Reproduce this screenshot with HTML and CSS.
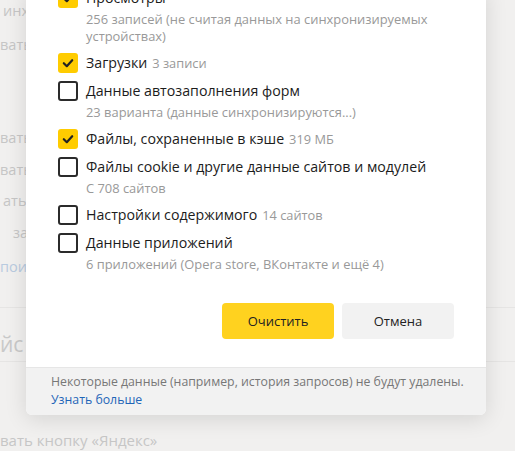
FILE: index.html
```html
<!DOCTYPE html>
<html lang="ru">
<head>
<meta charset="utf-8">
<title>Очистка истории</title>
<link rel="stylesheet" href="styles.css">
</head>
<body>
<div class="page">
  <div class="bg-row r1 ind3">инх</div>
  <div class="bg-row r2">вать</div>
  <div class="bg-row r3">вать</div>
  <div class="bg-row r4">вать</div>
  <div class="bg-row r5 ind3">ать</div>
  <div class="bg-row r6 ind13">зап</div>
  <div class="bg-row r7 link">поис</div>
  <div class="bg-sep s1"></div>
  <div class="bg-head">йс</div>
  <div class="bg-sep s2"></div>
  <div class="bg-row r9">вать кнопку «Яндекс»</div>
</div>

<div class="dialog">
  <div class="dialog-body">
    <ul class="items">
      <li class="item">
        <div class="row"><span class="cb checked"><svg viewBox="0 0 20 20" width="20" height="20"><path d="M5.8 10.2l3 3 5.4-6" fill="none" stroke="#222" stroke-width="2.2" stroke-linecap="round" stroke-linejoin="round"/></svg></span><span class="label">Просмотры</span></div>
        <div class="sub">256 записей (не считая данных на синхронизируемых<br>устройствах)</div>
      </li>
      <li class="item">
        <div class="row"><span class="cb checked"><svg viewBox="0 0 20 20" width="20" height="20"><path d="M5.8 10.2l3 3 5.4-6" fill="none" stroke="#222" stroke-width="2.2" stroke-linecap="round" stroke-linejoin="round"/></svg></span><span class="label">Загрузки<span class="count">3 записи</span></span></div>
      </li>
      <li class="item">
        <div class="row"><span class="cb"></span><span class="label">Данные автозаполнения форм</span></div>
        <div class="sub">23 варианта (данные синхронизируются...)</div>
      </li>
      <li class="item">
        <div class="row"><span class="cb checked"><svg viewBox="0 0 20 20" width="20" height="20"><path d="M5.8 10.2l3 3 5.4-6" fill="none" stroke="#222" stroke-width="2.2" stroke-linecap="round" stroke-linejoin="round"/></svg></span><span class="label">Файлы, сохраненные в кэше<span class="count">319 МБ</span></span></div>
      </li>
      <li class="item">
        <div class="row"><span class="cb"></span><span class="label">Файлы cookie и другие данные сайтов и модулей</span></div>
        <div class="sub">С 708 сайтов</div>
      </li>
      <li class="item">
        <div class="row"><span class="cb"></span><span class="label">Настройки содержимого<span class="count">14 сайтов</span></span></div>
      </li>
      <li class="item">
        <div class="row"><span class="cb"></span><span class="label">Данные приложений</span></div>
        <div class="sub">6 приложений (Opera store, ВКонтакте и ещё 4)</div>
      </li>
    </ul>
    <div class="actions">
      <button class="btn btn-primary">Очистить</button>
      <button class="btn btn-secondary">Отмена</button>
    </div>
  </div>
  <div class="dialog-footer">
    <div class="note">Некоторые данные (например, история запросов) не будут удалены.</div>
    <a class="more" href="#">Узнать больше</a>
  </div>
</div>
</body>
</html>
```

FILE: styles.css
```css
html, body {
  margin: 0;
  padding: 0;
}
body {
  width: 515px;
  height: 451px;
  overflow: hidden;
  background: #f1f0ef;
  font-family: "Open Sans", "Noto Sans", sans-serif;
  position: relative;
}
.page {
  display: flex;
  flex-direction: column;
  color: #c6c6c6;
  font-size: 14.5px;
}
.bg-row {
  line-height: 20px;
  height: 20px;
  white-space: nowrap;
}
.ind3 { padding-left: 3px; }
.ind13 { padding-left: 13px; }
.r1 { margin-top: 1px; }
.r2 { margin-top: 14px; }
.r3 { margin-top: 73px; }
.r4 { margin-top: 12px; }
.r5 { margin-top: 11px; }
.r6 { margin-top: 12px; }
.r7 { margin-top: 14px; }
.link { color: #b9cbe0; }
.bg-sep {
  height: 1px;
  background: #e6e5e4;
}
.s1 { margin-top: 30px; }
.bg-head {
  margin-top: 22px;
  font-size: 21px;
  line-height: 28px;
  height: 28px;
  color: #c9c9c9;
}
.s2 { margin-top: 3px; }
.r9 { margin-top: 68px; font-size: 15px; }

.dialog {
  position: absolute;
  left: 26px;
  top: -12px;
  width: 460px;
  background: #fff;
  border-radius: 0 0 6px 6px;
  box-shadow: 0 4px 22px rgba(0, 0, 0, 0.12);
  overflow: hidden;
}
.dialog-body {
  padding: 0 32px 28px 32px;
}
.items {
  list-style: none;
  margin: 0;
  padding: 0;
  display: flex;
  flex-direction: column;
  gap: 8px;
}
.row {
  display: flex;
  align-items: center;
  gap: 8px;
  height: 20px;
}
.cb {
  width: 20px;
  height: 20px;
  box-sizing: border-box;
  border: 2px solid #2b2b2b;
  border-radius: 3px;
  flex: none;
  display: block;
}
.cb.checked {
  border: none;
  background: #ffcc00;
}
.cb svg { display: block; }
.label {
  font-size: 14.2px;
  line-height: 20px;
  color: #1c1c1c;
  white-space: nowrap;
}
.count {
  font-size: 12.8px;
  color: #999;
  margin-left: 5px;
}
.sub {
  margin-top: 3px;
  padding-left: 28px;
  font-size: 12.9px;
  line-height: 17px;
  color: #999;
  white-space: nowrap;
}
.actions {
  display: flex;
  justify-content: flex-end;
  gap: 8px;
  margin-top: 30px;
}
.btn {
  width: 112px;
  height: 36px;
  border: none;
  border-radius: 4px;
  font-family: inherit;
  font-size: 13px;
  color: #222;
  padding: 0;
}
.btn-primary { background: #ffd21f; }
.btn-secondary { background: #f2f2f2; }
.dialog-footer {
  background: #f2f2f2;
  border-top: 1px solid #e6e6e6;
  padding: 5px 25px 6px;
  font-size: 12.3px;
  line-height: 18px;
  color: #777;
}
.note { white-space: nowrap; }
.more {
  color: #1f66b8;
  text-decoration: none;
}
```
